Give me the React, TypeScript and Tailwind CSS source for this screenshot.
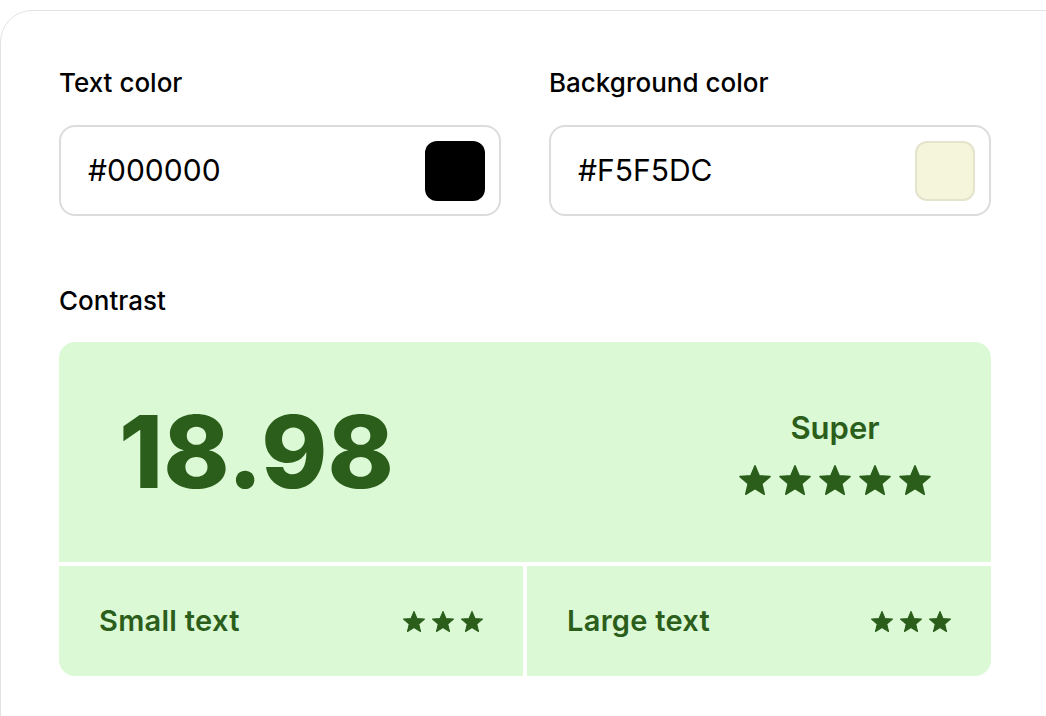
import React from "react"

function Star({ className }: { className: string }) {
    return (
        <svg viewBox="1.5 1.5 21 20" className={className} fill="currentColor" stroke="currentColor" strokeWidth={1} strokeLinejoin="round">
            <path d="M12 17.27L18.18 21l-1.64-7.03L22 9.24l-7.19-.61L12 2 9.19 8.63 2 9.24l5.46 4.73L5.82 21z" />
        </svg>
    )
}

function ColorField({ label, value, swatch }: { label: string, value: string, swatch: string }) {
    return (
        <div className="flex flex-col">
            <label className="text-[26px] leading-8 font-medium text-black">{label}</label>
            <div className="mt-[26px] h-[91px] rounded-2xl border-2 border-[#dcdcdc] bg-white pl-[27px] pr-[14px] flex items-center justify-between">
                <span className="text-[30px] text-black">{value}</span>
                <div className={`w-[60px] h-[60px] rounded-xl ${swatch}`} />
            </div>
        </div>
    )
}

export default function App() {
    return (
        <div className="w-[1046px] h-[716px] overflow-hidden bg-white pt-[10px] font-['Inter',sans-serif]">
            <div className="w-[1100px] h-[760px] border border-[#e3e3e3] rounded-tl-[32px] pt-[56px] pl-[58px]">
                <div className="w-[932px]">
                    <div className="grid grid-cols-2 gap-[48px]">
                        <ColorField label="Text color" value="#000000" swatch="bg-black" />
                        <ColorField label="Background color" value="#F5F5DC" swatch="bg-[#F5F5DC] border-2 border-[#e4e4cc]" />
                    </div>

                    <h3 className="mt-[69px] text-[26px] leading-8 font-medium text-black">Contrast</h3>

                    <div className="mt-[25px] flex flex-col gap-[4px] text-[#2b5e1b]">
                        <div className="h-[220px] bg-[#dbf9d5] rounded-t-2xl pl-[60px] pr-[60px] flex items-center justify-between">
                            <span className="text-[100px] font-extrabold leading-none">18.98</span>
                            <div className="flex flex-col items-center gap-[19px]">
                                <span className="text-[31px] font-semibold leading-9">Super</span>
                                <div className="flex gap-2">
                                    {[0, 1, 2, 3, 4].map(i => <Star key={i} className="w-[32px] h-[30px]" />)}
                                </div>
                            </div>
                        </div>
                        <div className="grid grid-cols-2 gap-[4px]">
                            <div className="h-[110px] bg-[#dbf9d5] rounded-bl-2xl px-10 flex items-center justify-between">
                                <span className="text-[29px] font-semibold tracking-[0.01em]">Small text</span>
                                <div className="flex gap-[7px]">
                                    {[0, 1, 2].map(i => <Star key={i} className="w-[22px] h-[21px]" />)}
                                </div>
                            </div>
                            <div className="h-[110px] bg-[#dbf9d5] rounded-br-2xl px-10 flex items-center justify-between">
                                <span className="text-[29px] font-semibold tracking-[0.01em]">Large text</span>
                                <div className="flex gap-[7px]">
                                    {[0, 1, 2].map(i => <Star key={i} className="w-[22px] h-[21px]" />)}
                                </div>
                            </div>
                        </div>
                    </div>
                </div>
            </div>
        </div>
    )
}
